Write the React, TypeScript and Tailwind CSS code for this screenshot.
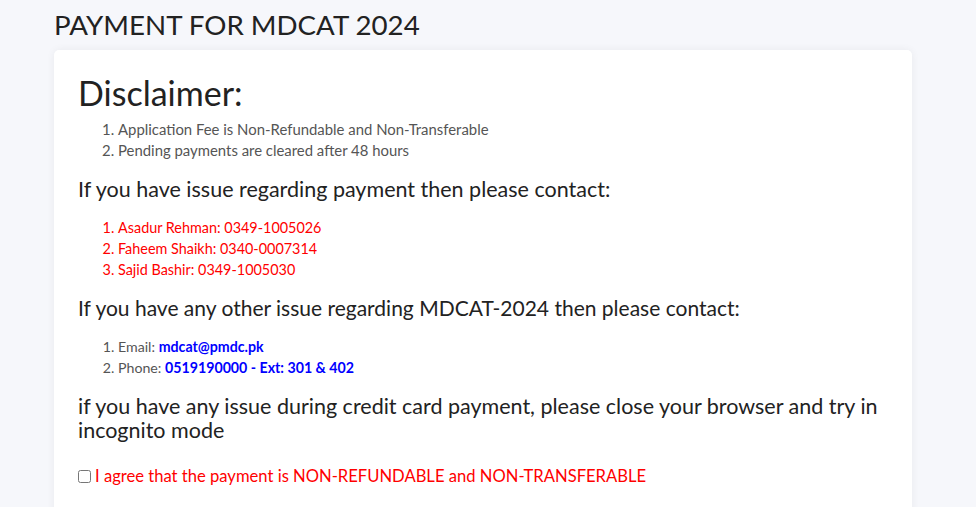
import React from "react";

const paymentContacts = [
  "Asadur Rehman: 0349-1005026",
  "Faheem Shaikh: 0340-0007314",
  "Sajid Bashir: 0349-1005030",
];

export default function App() {
  return (
    <div className="min-h-screen bg-[#f6f7fb] font-['Lato',sans-serif] text-[#333]">
      <div className="ml-[54px] w-[858px]">
        <h3 className="pt-[8px] pb-[8px] text-[27.7px] leading-[34px] text-[#222]">
          PAYMENT FOR MDCAT 2024
        </h3>

        <div className="rounded-[5px] bg-white px-6 pt-[23px] pb-10 shadow-[0_0_8px_rgba(0,0,0,0.06)]">
          <h2 className="text-[34px] leading-[40px] text-[#222]">Disclaimer:</h2>
          <ol className="mt-[6px] list-decimal pl-10 text-[14.9px] leading-[21px] text-[#555]">
            <li>Application Fee is Non-Refundable and Non-Transferable</li>
            <li>Pending payments are cleared after 48 hours</li>
          </ol>

          <h5 className="mt-[15px] text-[21.5px] leading-[26px] text-[#222]">
            If you have issue regarding payment then please contact:
          </h5>
          <ol className="mt-[15px] list-decimal pl-10 text-[14.4px] leading-[21px] text-[#ff0000]">
            {paymentContacts.map((c) => (
              <li key={c}>{c}</li>
            ))}
          </ol>

          <h5 className="mt-[15px] text-[21px] leading-[26px] text-[#222]">
            If you have any other issue regarding MDCAT-2024 then please contact:
          </h5>
          <ol className="mt-[15px] list-decimal pl-10 text-[14.2px] leading-[21px] text-[#555]">
            <li>
              Email: <b className="text-[#0000ff]">mdcat@pmdc.pk</b>
            </li>
            <li>
              Phone: <b className="text-[#0000ff]">0519190000 - Ext: 301 &amp; 402</b>
            </li>
          </ol>

          <h5 className="mt-[16px] text-[21.5px] leading-[24px] text-[#222]">
            if you have any issue during credit card payment, please close your browser and try in incognito mode
          </h5>

          <label className="mt-[24px] flex items-center gap-[4px] text-[16.6px] leading-[21px] text-[#ff0000]">
            <input type="checkbox" className="h-[13px] w-[13px]" />
            <span>I agree that the payment is NON-REFUNDABLE and NON-TRANSFERABLE</span>
          </label>
        </div>
      </div>
    </div>
  );
}
